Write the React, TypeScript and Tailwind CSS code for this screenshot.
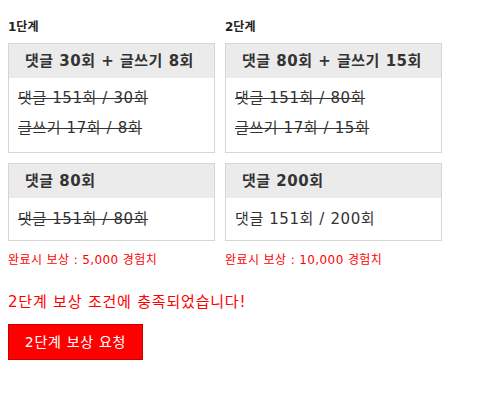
import React from "react";

type Row = { text: string; done: boolean };
type Mission = { title: string; rows: Row[] };
type Stage = { label: string; width: string; missions: Mission[]; reward: string };

const stages: Stage[] = [
  {
    label: "1단계",
    width: "w-[207px]",
    missions: [
      {
        title: "댓글 30회 + 글쓰기 8회",
        rows: [
          { text: "댓글 151회 / 30회", done: true },
          { text: "글쓰기 17회 / 8회", done: true },
        ],
      },
      { title: "댓글 80회", rows: [{ text: "댓글 151회 / 80회", done: true }] },
    ],
    reward: "완료시 보상 : 5,000 경험치",
  },
  {
    label: "2단계",
    width: "w-[217px]",
    missions: [
      {
        title: "댓글 80회 + 글쓰기 15회",
        rows: [
          { text: "댓글 151회 / 80회", done: true },
          { text: "글쓰기 17회 / 15회", done: true },
        ],
      },
      { title: "댓글 200회", rows: [{ text: "댓글 151회 / 200회", done: false }] },
    ],
    reward: "완료시 보상 : 10,000 경험치",
  },
];

function MissionBox({ mission }: { mission: Mission }) {
  const multi = mission.rows.length > 1;
  return (
    <div className="border border-[#d6d6d6] bg-white">
      <div className="h-[34px] flex items-center px-4 bg-[#ebebeb] text-[15px] font-bold tracking-[0.5px] text-[#333] whitespace-nowrap">
        {mission.title}
      </div>
      <div className={multi ? "pt-[5px] pb-[9px] pl-[9px]" : "py-[6px] pl-[9px]"}>
        {mission.rows.map((r) => (
          <div
            key={r.text}
            className={`h-[30px] flex items-center text-[15px] tracking-[0.6px] text-[#333] ${r.done ? "line-through" : ""}`}
          >
            {r.text}
          </div>
        ))}
      </div>
    </div>
  );
}

export default function App() {
  return (
    <div className="min-h-screen bg-white px-2 pt-[19px] font-[DejaVu_Sans,Noto_Sans_CJK_KR,sans-serif]">
      <div className="flex gap-[10px]">
        {stages.map((s) => (
          <div key={s.label} className={s.width}>
            <div className="h-4 leading-4 text-xs font-bold text-[#222] mb-2">{s.label}</div>
            <div className="flex flex-col gap-[10px]">
              {s.missions.map((m) => (
                <MissionBox key={m.title} mission={m} />
              ))}
            </div>
            <div className="mt-[11px] h-4 leading-4 text-xs tracking-[0.4px] text-[#ff0000] whitespace-nowrap">
              {s.reward}
            </div>
          </div>
        ))}
      </div>

      <p className="mt-6 h-5 leading-5 text-[15px] tracking-[0.8px] text-[#ff0000]">
        2단계 보상 조건에 충족되었습니다!
      </p>

      <button className="mt-3 w-[135px] h-9 bg-[#ff0000] border border-[#c80000] text-white text-sm tracking-[0.7px]">
        2단계 보상 요청
      </button>
    </div>
  );
}
